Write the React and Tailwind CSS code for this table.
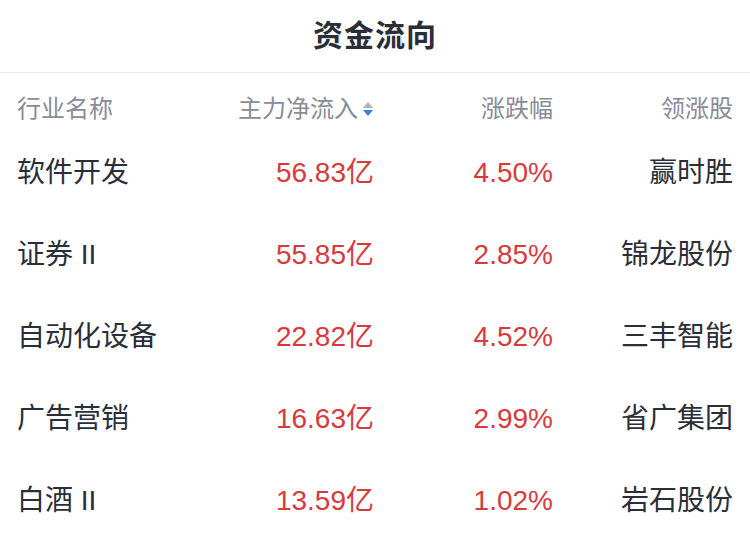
/**
 * Capital flow table — industry net inflow ranking.
 */
const rows = [
  { name: "软件开发", flow: "56.83亿", pct: "4.50%", lead: "赢时胜" },
  { name: "证券 II", flow: "55.85亿", pct: "2.85%", lead: "锦龙股份" },
  { name: "自动化设备", flow: "22.82亿", pct: "4.52%", lead: "三丰智能" },
  { name: "广告营销", flow: "16.63亿", pct: "2.99%", lead: "省广集团" },
  { name: "白酒 II", flow: "13.59亿", pct: "1.02%", lead: "岩石股份" },
];

const SortIcon = () => (
  <svg width="12" height="18" viewBox="0 0 12 18" className="ml-[4px]">
    <path d="M6 2 L11 8 L1 8 Z" fill="#aeb3bc" />
    <path d="M1 10 L11 10 L6 16 Z" fill="#3a7de6" />
  </svg>
);

export default function App() {
  return (
    <div
      className="w-[750px] h-[548px] bg-white overflow-hidden"
      style={{ fontFamily: '"Liberation Sans", "Noto Sans CJK SC", sans-serif' }}
    >
      <div className="h-[73px] flex items-center justify-center border-b border-[#ebebee]">
        <h1 className="text-[30px] font-semibold text-[#2a2e39] leading-none tracking-[1px]">资金流向</h1>
      </div>

      <div className="flex items-center px-[17px] pt-[12px] h-[59px] text-[24px] leading-[28px] text-[#878c97]">
        <div className="flex-1">行业名称</div>
        <div className="w-[174px] flex justify-end items-center">
          主力净流入
          <SortIcon />
        </div>
        <div className="w-[179px] text-right">涨跌幅</div>
        <div className="w-[180px] text-right">领涨股</div>
      </div>

      {rows.map((r) => (
        <div key={r.name} className="flex items-center h-[82px] px-[17px] text-[28px]">
          <div className="flex-1 text-[#2a2e39]">{r.name}</div>
          <div className="w-[174px] text-right text-[#d83a3c]">{r.flow}</div>
          <div className="w-[179px] text-right text-[#d83a3c]">{r.pct}</div>
          <div className="w-[180px] text-right text-[#2a2e39]">{r.lead}</div>
        </div>
      ))}
    </div>
  );
}
